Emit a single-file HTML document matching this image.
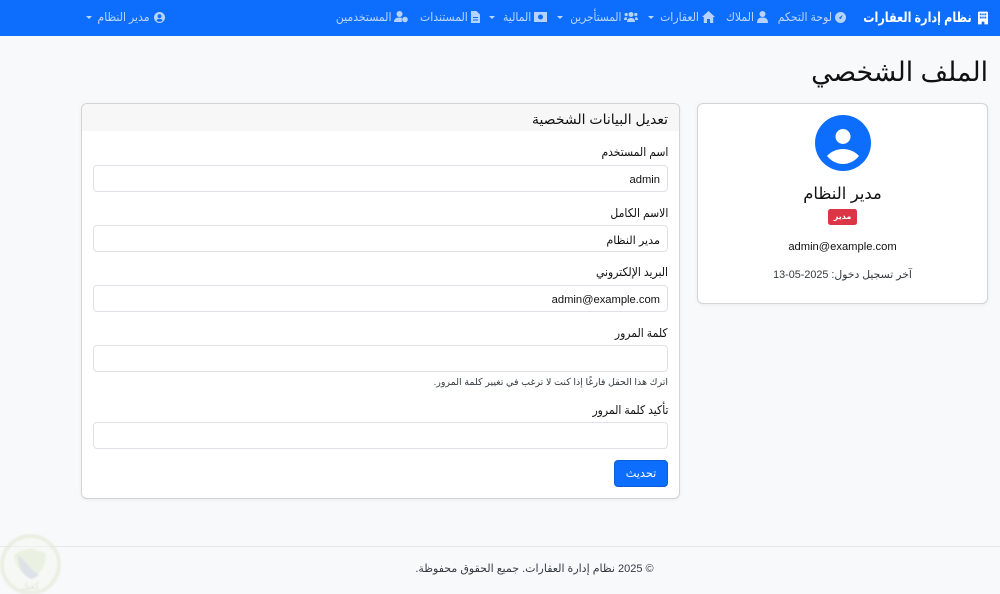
<!DOCTYPE html>
<html lang="ar" dir="rtl">
<head>
<meta charset="utf-8">
<title>الملف الشخصي</title>
<style>
html,body{margin:0;padding:0;width:1000px;height:594px;overflow:hidden;background:#f8f9fa;font-family:"Liberation Sans","DejaVu Sans",sans-serif;color:#212529}
.t{position:absolute;white-space:nowrap;line-height:20px;height:20px;direction:rtl}
.nav{position:absolute;left:0;top:0;width:1000px;height:36px;background:#0d6efd}
.n{color:#bcd6fe;font-size:12px;transform:scaleX(.905);transform-origin:right center}
.i{position:absolute;fill:#b6d2fe}
.c{position:absolute;width:0;height:0;border-left:3px solid transparent;border-right:3px solid transparent;border-top:3px solid #bcd6fe;top:16px}
.card{position:absolute;background:#fff;border:1px solid #d3d4d5;border-radius:6px;box-sizing:border-box;box-shadow:0 1px 3px rgba(0,0,0,.06)}
.inp{position:absolute;left:93px;width:575px;height:27px;box-sizing:border-box;background:#fff;border:1px solid #dee2e6;border-radius:4px}
.l{font-size:12px;color:#111;right:332px;transform:scaleX(.9);transform-origin:right center}
.v{font-size:11.2px;color:#111;right:340px}
</style>
</head>
<body>
<div class="nav"></div>

<svg class="i" style="left:978px;top:11px;fill:#fff" width="10" height="14" viewBox="0 0 11 14"><path fill-rule="evenodd" d="M1 0h9a1 1 0 0 1 1 1v13H7v-3H4v3H0V1a1 1 0 0 1 1-1zM2 2v2h2V2zM4.700 2v2h1.600V2zM7 2v2h2V2zM2 5.500v2h2v-2zM4.700 5.500v2h1.600v-2zM7 5.500v2h2v-2z"/></svg>
<div class="t" style="right:28px;top:8px;color:#fff;font-weight:bold;font-size:13.5px;transform:scaleX(.83);transform-origin:right center">نظام إدارة العقارات</div>

<svg class="i" style="left:835px;top:12px" width="11" height="11" viewBox="0 0 11 11"><path fill-rule="evenodd" d="M5.500 0a5.500 5.500 0 1 1 0 11a5.500 5.500 0 0 1 0-11zM7.800 2.800L5 5a1 1 0 1 0 1.200 1.200z"/></svg>
<div class="t n" style="right:168px;top:7px">لوحة التحكم</div>

<svg class="i" style="left:757px;top:11px" width="11" height="12" viewBox="0 0 11 12"><circle cx="5.500" cy="3" r="3"/><path d="M0 12c0-4 2-5.500 5.500-5.500S11 8 11 12z"/></svg>
<div class="t n" style="right:246px;top:7px">الملاك</div>

<svg class="i" style="left:702px;top:11px" width="13" height="12" viewBox="0 0 13 12"><path d="M6.500 0L13 6h-1.800v6H8V8H5v4H1.800V6H0z"/></svg>
<div class="t n" style="right:301px;top:7px">العقارات</div>
<div class="c" style="left:648px"></div>

<svg class="i" style="left:624px;top:12px" width="14" height="10" viewBox="0 0 14 10"><circle cx="7" cy="2.500" r="2.500"/><circle cx="2.200" cy="2.500" r="1.600"/><circle cx="11.800" cy="2.500" r="1.600"/><path d="M3 10c0-3 1.500-4 4-4s4 1 4 4zM0 8c0-2 1-3 2.500-3l.5 3zM14 8c0-2-1-3-2.500-3L11 8z"/></svg>
<div class="t n" style="right:379px;top:7px;transform:scaleX(.875)">المستأجرين</div>
<div class="c" style="left:557px"></div>

<svg class="i" style="left:534px;top:12px" width="13" height="10" viewBox="0 0 13 10"><path fill-rule="evenodd" d="M0 0h13v10H0zM6.500 2.500a2.500 2.500 0 1 0 0 5a2.500 2.500 0 0 0 0-5z"/></svg>
<div class="t n" style="right:469px;top:7px">المالية</div>
<div class="c" style="left:489px"></div>

<svg class="i" style="left:471px;top:11px" width="9" height="12" viewBox="0 0 9 12"><path fill-rule="evenodd" d="M0 0h5.500L9 3.500V12H0zM2 6v1h5V6zM2 8.500v1h5v-1z"/></svg>
<div class="t n" style="right:532px;top:7px">المستندات</div>

<svg class="i" style="left:394px;top:11px" width="14" height="12" viewBox="0 0 14 12"><circle cx="5.500" cy="3" r="3"/><path d="M0 11c0-3 2-4.500 5.500-4.500c1 0 1.600.1 2.300.4V11z"/><circle cx="11" cy="8.500" r="2.800"/></svg>
<div class="t n" style="right:609px;top:7px">المستخدمين</div>

<svg class="i" style="left:154px;top:12px" width="11" height="11" viewBox="0 0 11 11"><path fill-rule="evenodd" d="M5.500 0a5.500 5.500 0 1 1 0 11a5.500 5.500 0 0 1 0-11zM5.500 2.300a1.900 1.900 0 1 0 0 3.800a1.900 1.900 0 0 0 0-3.800zM2.500 8.600a4.200 4.200 0 0 0 6 0C8 7.400 7 6.800 5.500 6.800S3 7.400 2.500 8.600z"/></svg>
<div class="t n" style="right:850px;top:7px">مدير النظام</div>
<div class="c" style="left:86px"></div>

<div class="t" style="right:12px;top:54px;height:36px;line-height:36px;font-size:26.7px;color:#111">الملف الشخصي</div>

<div class="card" style="left:697px;top:103px;width:291px;height:201px"></div>
<svg style="position:absolute;left:815px;top:115px" width="56" height="56" viewBox="0 0 56 56"><circle cx="28" cy="28" r="28" fill="#0d6efd"/><circle cx="28" cy="21.500" r="7.500" fill="#fff"/><path d="M12 41C16 36.500 22 34 28 34S40 36.500 44 41C40 46 34 49 28 49S16 46 12 41z" fill="#fff"/></svg>
<div class="t" style="left:697px;width:291px;text-align:center;top:183.500px;font-size:16.4px;color:#111">مدير النظام</div>
<div style="position:absolute;left:828px;top:209px;width:29px;height:16px;background:#dc3545;border-radius:2.500px;color:#fff;font-size:8px;font-weight:bold;text-align:center;line-height:16px;direction:rtl">مدير</div>
<div class="t" style="left:697px;width:291px;text-align:center;top:237px;font-size:11.2px;color:#111">admin@example.com</div>
<div class="t" style="left:697px;width:291px;text-align:center;top:265px;font-size:10.8px;color:#343a40">آخر تسجيل دخول: 2025-05-13</div>

<div class="card" style="left:81px;top:103px;width:599px;height:396px;overflow:hidden"><div style="height:27px;background:#f7f7f7"></div></div>
<div class="t" style="right:332px;top:109px;font-size:14px;color:#111">تعديل البيانات الشخصية</div>

<div class="t l" style="top:142px">اسم المستخدم</div>
<div class="inp" style="top:165px"></div>
<div class="t v" style="top:170px;direction:ltr">admin</div>

<div class="t l" style="top:203px">الاسم الكامل</div>
<div class="inp" style="top:225px"></div>
<div class="t v" style="top:231px">مدير النظام</div>

<div class="t l" style="top:262px">البريد الإلكتروني</div>
<div class="inp" style="top:285px"></div>
<div class="t v" style="top:290px;direction:ltr">admin@example.com</div>

<div class="t l" style="top:323px">كلمة المرور</div>
<div class="inp" style="top:345px"></div>
<div class="t" style="right:332px;top:373px;font-size:9.500px;color:#343a40">اترك هذا الحقل فارغًا إذا كنت لا ترغب في تغيير كلمة المرور.</div>

<div class="t l" style="top:400px">تأكيد كلمة المرور</div>
<div class="inp" style="top:422px"></div>

<div style="position:absolute;left:614px;top:460px;width:54px;height:27px;background:#0d6efd;border:1px solid #0b5ed7;box-sizing:border-box;border-radius:4px;color:#fff;font-size:11.3px;text-align:center;line-height:27px;direction:rtl">تحديث</div>

<div style="position:absolute;left:0;top:546px;width:1000px;height:1px;background:#e6e8ea"></div>
<div class="t" style="left:0;width:1069px;text-align:center;top:558.500px;font-size:11px;color:#343a40">© 2025 نظام إدارة العقارات. جميع الحقوق محفوظة.</div>

<svg style="position:absolute;left:0;top:534px;opacity:.55;filter:blur(.7px)" width="62" height="60" viewBox="0 0 62 60"><circle cx="30.500" cy="30.500" r="28.500" fill="#f6f8f4" stroke="#dfe8d2" stroke-width="4"/><path d="M14 20c6-3 11-4 17-6c5 2 10 3 15 5c0 12-4 21-15 25c-10-4-17-13-17-24z" fill="#e2ecd0"/><path d="M18 21c7 5 11 13 21 20c-3 2-6 4-8 4c-8-3-13-12-13-24z" fill="#c6d1da"/><text x="30" y="55" font-size="9" fill="#c5d5b3" text-anchor="middle" direction="rtl" font-family="DejaVu Sans, sans-serif">كفيل</text></svg>
</body>
</html>
